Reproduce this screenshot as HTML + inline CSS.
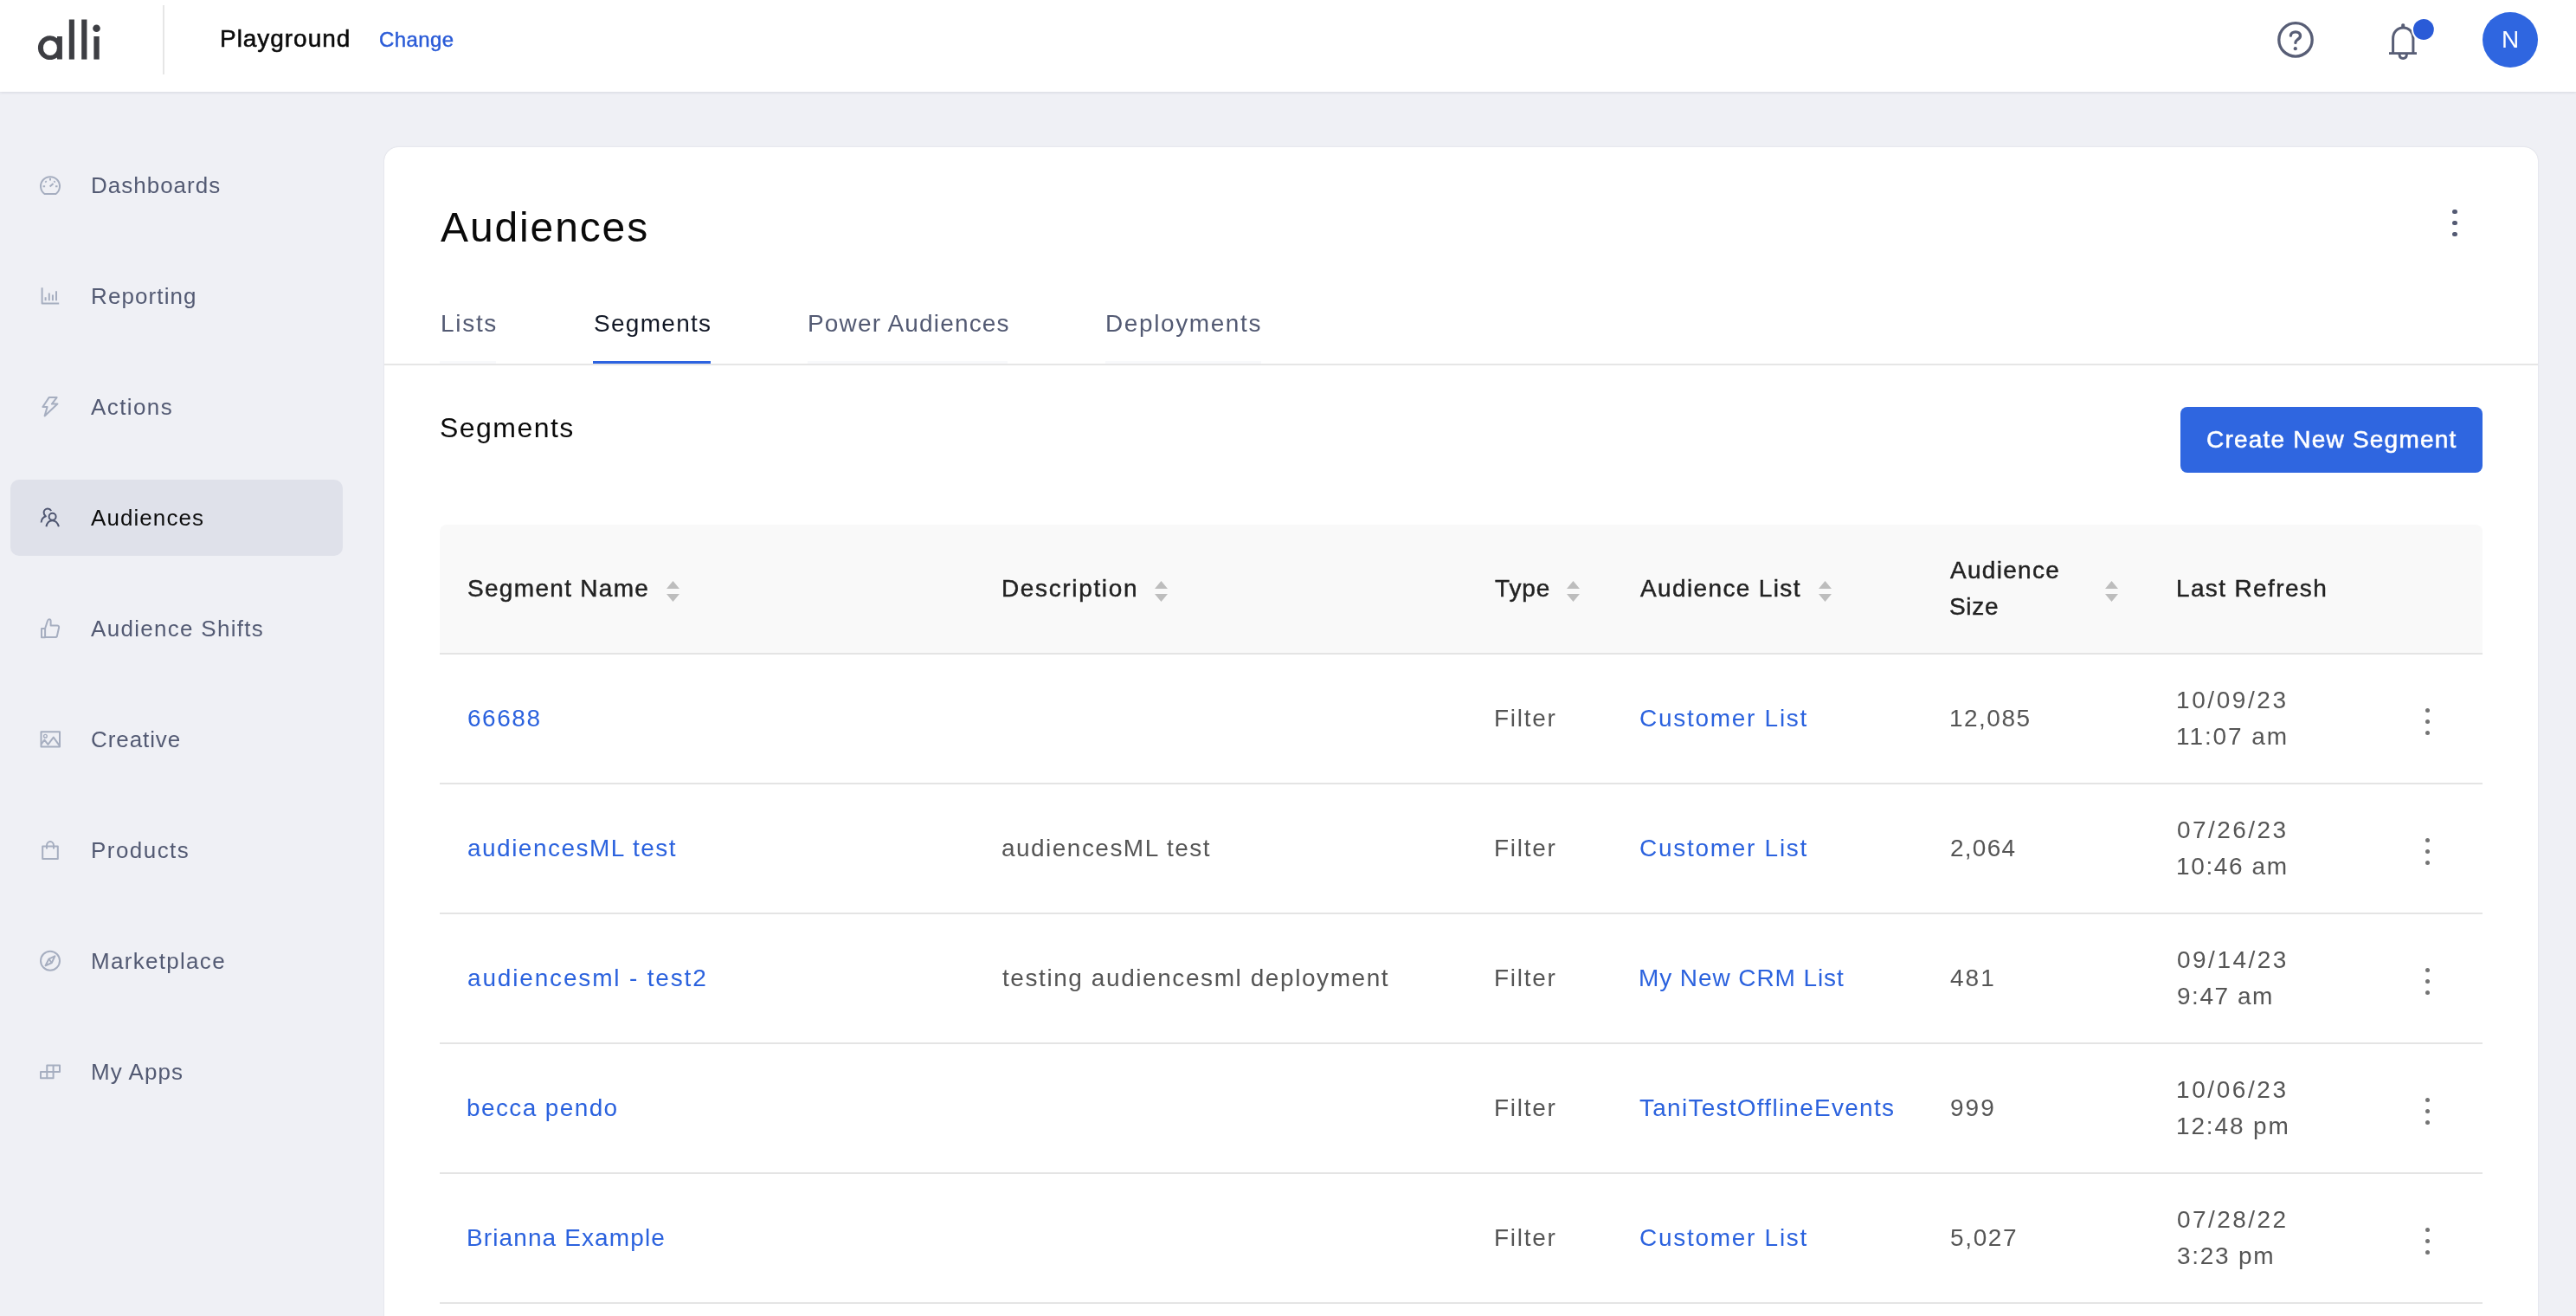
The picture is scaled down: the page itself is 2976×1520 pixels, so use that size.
<!DOCTYPE html>
<html><head><meta charset="utf-8"><title>Audiences - Segments</title>
<style>
html,body{margin:0;padding:0}
body{width:2976px;height:1520px;overflow:hidden;position:relative;background:#eff0f5;font-family:"Liberation Sans",sans-serif}
.t{position:absolute;white-space:pre;line-height:1;will-change:transform;font-family:"Liberation Sans",sans-serif}
.b{position:absolute}
@media (max-width:2000px){html{zoom:0.5}}
</style></head><body>
<div class="b" style="left:0px;top:0px;width:2976px;height:106px;background:#fff;box-shadow:0 1px 3px rgba(30,40,70,.12);z-index:2"></div>
<div class="b" style="left:188px;top:6px;width:2px;height:80px;background:#e6e6e6;z-index:3"></div>
<svg class="b" style="left:0;top:0;z-index:3" width="140" height="90" viewBox="0 0 140 90">
<g fill="#3d3e43">
<path fill-rule="evenodd" d="M57.9 41.3a13.9 13.9 0 1 0 8.1 25.1v2.2h5.9V42.1H66v2.2a13.8 13.8 0 0 0-8.1-3zM57.9 46.5a8 8.8 0 1 1 0 17.6a8 8.8 0 1 1 0-17.6z"/>
<rect x="79.8" y="22.5" width="6.1" height="46.1"/>
<rect x="94.2" y="22.5" width="6.2" height="46.1"/>
<rect x="108.4" y="42" width="6.3" height="26.6"/>
<circle cx="111.5" cy="32.8" r="4.3"/>
</g></svg>
<div class="t" style="left:254.30px;top:31.00px;font-size:28px;color:#0b0b0b;letter-spacing:0.956px;-webkit-text-stroke:0.55px #0b0b0b;z-index:4">Playground</div>
<div class="t" style="left:438.00px;top:34.45px;font-size:24px;color:#2a5bd7;letter-spacing:0.400px;-webkit-text-stroke:0.45px #2a5bd7;z-index:4">Change</div>
<svg class="b" style="left:2620px;top:10px;z-index:3" width="100" height="80" viewBox="0 0 100 80">
<g fill="none" stroke="#585e76" stroke-width="3.3" stroke-linecap="round">
<circle cx="32" cy="35.9" r="19.2"/>
<path d="M26.4 31.2c0-2.7 2.4-4.4 5.6-4.4s5.5 1.9 5.5 4.6c0 2.3-1.7 3.3-3.5 4.6c-1.5 1.1-2.1 2.1-2.1 3.4"/>
</g><circle cx="31.8" cy="46.2" r="2.1" fill="#585e76"/></svg>
<svg class="b" style="left:2740px;top:10px;z-index:3" width="100" height="80" viewBox="0 0 100 80">
<g fill="none" stroke="#585e76" stroke-width="3" stroke-linejoin="round">
<path d="M24.6 51.6V34.5c0-7.2 5-12.6 11.8-12.6s11.5 5.4 11.5 12.6v17.1"/>
<path d="M32 52.8c0.2 2.9 2 4.6 4.2 4.6s4-1.7 4.2-4.6"/>
</g>
<rect x="20" y="50.2" width="32" height="2.8" fill="#585e76"/>
<rect x="34.2" y="17.3" width="4" height="5" rx="1.5" fill="#585e76"/>
<circle cx="59.9" cy="24" r="14" fill="#fff"/>
<circle cx="59.9" cy="24" r="11.9" fill="#2a5bd7"/>
</svg>
<div class="b" style="left:2868px;top:14px;width:64px;height:64px;background:#2f66e0;border-radius:50%;z-index:3"></div>
<div class="t" style="left:2890.00px;top:32.00px;font-size:28px;color:#fff;letter-spacing:0.000px;z-index:4">N</div>
<div class="b" style="left:12px;top:554px;width:384px;height:88px;background:#dfe1ea;border-radius:10px"></div>
<div class="t" style="left:104.70px;top:201.35px;font-size:26px;color:#535a73;letter-spacing:1.000px;">Dashboards</div>
<svg class="b" style="left:40px;top:196px" width="36" height="36" viewBox="0 0 36 36"><g fill="none" stroke="#a6aec0" stroke-width="2" stroke-linejoin="round"><path d="M11.5 28A11 11 0 1 1 24.5 28Z"/><path d="M18 9.8v2.8M9.6 19.2h2.5M24 19.2h2.5M12.4 13.3l1.2 1.2M23.6 13.3l-1.2 1.2M17.6 19.6l4-3.6"/></g></svg>
<div class="t" style="left:104.90px;top:329.35px;font-size:26px;color:#535a73;letter-spacing:1.100px;">Reporting</div>
<svg class="b" style="left:40px;top:324px" width="36" height="36" viewBox="0 0 36 36"><g fill="none" stroke="#a6aec0" stroke-width="2" stroke-linejoin="round"><path d="M8.6 8.3V26.5H28.2"/><path d="M12.6 19.2v4M16.8 14.4v8.8M20.9 16.5v6.7M25 12.2v11"/></g></svg>
<div class="t" style="left:104.70px;top:457.35px;font-size:26px;color:#535a73;letter-spacing:1.400px;">Actions</div>
<svg class="b" style="left:40px;top:452px" width="36" height="36" viewBox="0 0 36 36"><g fill="none" stroke="#a6aec0" stroke-width="2" stroke-linejoin="round"><path d="M16.6 7.1H25.6L19.9 14.6H26.4L11.6 28.4L14.6 18H9.4Z"/></g></svg>
<div class="t" style="left:104.70px;top:585.35px;font-size:26px;color:#0d0d0d;letter-spacing:1.075px;">Audiences</div>
<svg class="b" style="left:40px;top:580px" width="36" height="36" viewBox="0 0 36 36"><g fill="none" stroke="#4f5671" stroke-width="2" stroke-linejoin="round"><circle cx="20.6" cy="16.7" r="4"/><path d="M13.4 28.3c0.9-4.2 3.6-7.1 7-7.1s6.3 2.9 7.5 7.1"/><path d="M19.2 9.9c-0.9-1.5-2.4-2.4-4.1-2.4c-2.6 0-4.5 2.1-4.5 4.6c0 1.7 0.9 3.2 2.3 4.2c-3.2 1-5 3.5-5.3 7.2"/></g></svg>
<div class="t" style="left:104.70px;top:713.35px;font-size:26px;color:#535a73;letter-spacing:1.300px;">Audience Shifts</div>
<svg class="b" style="left:40px;top:708px" width="36" height="36" viewBox="0 0 36 36"><g fill="none" stroke="#a6aec0" stroke-width="2" stroke-linejoin="round"><path d="M8 18H12.1V28.2H8Z"/><path d="M12.1 18L14.9 9.3c0.4-1.3 1-2.1 1.9-2.1c1 0 1.8 0.8 1.8 2.1v5.1h7.5c1.3 0 2.3 1.1 2 2.3l-2.1 9.5c-0.2 1.1-1.1 1.9-2.2 1.9H12.1"/></g></svg>
<div class="t" style="left:104.80px;top:841.35px;font-size:26px;color:#535a73;letter-spacing:0.914px;">Creative</div>
<svg class="b" style="left:40px;top:836px" width="36" height="36" viewBox="0 0 36 36"><g fill="none" stroke="#a6aec0" stroke-width="2" stroke-linejoin="round"><rect x="7.5" y="9.2" width="21.5" height="17.2"/><circle cx="12.4" cy="14.2" r="1.85" stroke-width="1.4"/><path d="M7.5 23.6l3.9-5l4.1 5.3l6.3-8.3l7.2 10"/></g></svg>
<div class="t" style="left:104.80px;top:969.35px;font-size:26px;color:#535a73;letter-spacing:1.457px;">Products</div>
<svg class="b" style="left:40px;top:964px" width="36" height="36" viewBox="0 0 36 36"><g fill="none" stroke="#a6aec0" stroke-width="2" stroke-linejoin="round"><rect x="9.2" y="13.4" width="17.6" height="14.5"/><path d="M14 16.6v-3.8c0-2.8 1.8-4.8 4-4.8s4 2 4 4.8v3.8"/></g></svg>
<div class="t" style="left:104.80px;top:1097.35px;font-size:26px;color:#535a73;letter-spacing:1.300px;">Marketplace</div>
<svg class="b" style="left:40px;top:1092px" width="36" height="36" viewBox="0 0 36 36"><g fill="none" stroke="#a6aec0" stroke-width="2" stroke-linejoin="round"><circle cx="18" cy="17.8" r="11"/><path d="M12.6 23.3L16.4 15.6L23.4 12.3L19.8 20Z"/><path d="M16.4 15.6L19.8 20"/></g></svg>
<div class="t" style="left:104.80px;top:1225.35px;font-size:26px;color:#535a73;letter-spacing:1.033px;">My Apps</div>
<svg class="b" style="left:40px;top:1220px" width="36" height="36" viewBox="0 0 36 36"><g fill="none" stroke="#a6aec0" stroke-width="2" stroke-linejoin="round"><path d="M7 17.9H29V10.4H14.3V25.2H7Z"/><path d="M21.6 10.4V25.2H14.3"/></g></svg>
<div class="b" style="left:444px;top:170px;width:2488px;height:1400px;background:#fff;border-radius:16px;box-shadow:0 0 1.5px rgba(20,30,60,.18)"></div>
<div class="t" style="left:509.20px;top:238.50px;font-size:48px;color:#0a0a0a;letter-spacing:1.875px;">Audiences</div>
<div class="b" style="left:2833.3px;top:242.05px;width:5.3px;height:5.3px;background:#535a73;border-radius:50%"></div>
<div class="b" style="left:2833.3px;top:255.15px;width:5.3px;height:5.3px;background:#535a73;border-radius:50%"></div>
<div class="b" style="left:2833.3px;top:268.05px;width:5.3px;height:5.3px;background:#535a73;border-radius:50%"></div>
<div class="b" style="left:444px;top:420px;width:2488px;height:2px;background:#e6e6e6;"></div>
<div class="t" style="left:508.60px;top:360.15px;font-size:28px;color:#535a73;letter-spacing:1.700px;">Lists</div>
<div class="t" style="left:685.80px;top:360.15px;font-size:28px;color:#121826;letter-spacing:1.286px;">Segments</div>
<div class="t" style="left:932.80px;top:360.15px;font-size:28px;color:#535a73;letter-spacing:1.157px;">Power Audiences</div>
<div class="t" style="left:1276.70px;top:360.15px;font-size:28px;color:#535a73;letter-spacing:1.600px;">Deployments</div>
<div class="b" style="left:685px;top:417px;width:136px;height:3px;background:#2d63e0;"></div>
<div class="b" style="left:508px;top:417px;width:65px;height:3px;background:#f8f9fb;"></div>
<div class="b" style="left:933px;top:417px;width:231px;height:3px;background:#f8f9fb;"></div>
<div class="b" style="left:1277px;top:417px;width:180px;height:3px;background:#f8f9fb;"></div>
<div class="t" style="left:507.50px;top:478.25px;font-size:32px;color:#0a0a0a;letter-spacing:1.457px;">Segments</div>
<div class="b" style="left:2519px;top:470px;width:349px;height:76px;background:#2f66e0;border-radius:8px"></div>
<div class="t" style="left:2549.20px;top:494.20px;font-size:28px;color:#fff;letter-spacing:1.212px;-webkit-text-stroke:0.55px #fff;">Create New Segment</div>
<div class="b" style="left:508px;top:606px;width:2360px;height:148px;background:#f9f9f9;border-radius:8px 8px 0 0"></div>
<div class="b" style="left:508px;top:754px;width:2360px;height:2px;background:#e4e4e4;"></div>
<div class="b" style="left:508px;top:904px;width:2360px;height:2px;background:#e4e4e4;"></div>
<div class="b" style="left:508px;top:1054px;width:2360px;height:2px;background:#e4e4e4;"></div>
<div class="b" style="left:508px;top:1204px;width:2360px;height:2px;background:#e4e4e4;"></div>
<div class="b" style="left:508px;top:1354px;width:2360px;height:2px;background:#e4e4e4;"></div>
<div class="b" style="left:508px;top:1504px;width:2360px;height:2px;background:#e4e4e4;"></div>
<div class="t" style="left:540.00px;top:666.25px;font-size:28px;color:#222222;letter-spacing:1.309px;-webkit-text-stroke:0.45px #222222;">Segment Name</div>
<svg class="b" style="left:769.6px;top:670px" width="15" height="26" viewBox="0 0 15 26"><path d="M7.5 1L15 10H0Z M0 16H15L7.5 25Z" fill="#bdbdbd"/></svg>
<div class="t" style="left:1156.75px;top:666.15px;font-size:28px;color:#222222;letter-spacing:1.640px;-webkit-text-stroke:0.45px #222222;">Description</div>
<svg class="b" style="left:1333.75px;top:670px" width="15" height="26" viewBox="0 0 15 26"><path d="M7.5 1L15 10H0Z M0 16H15L7.5 25Z" fill="#bdbdbd"/></svg>
<div class="t" style="left:1727.10px;top:666.15px;font-size:28px;color:#222222;letter-spacing:0.867px;-webkit-text-stroke:0.45px #222222;">Type</div>
<svg class="b" style="left:1810.3px;top:670px" width="15" height="26" viewBox="0 0 15 26"><path d="M7.5 1L15 10H0Z M0 16H15L7.5 25Z" fill="#bdbdbd"/></svg>
<div class="t" style="left:1895.10px;top:666.15px;font-size:28px;color:#222222;letter-spacing:1.367px;-webkit-text-stroke:0.45px #222222;">Audience List</div>
<svg class="b" style="left:2100.5px;top:670px" width="15" height="26" viewBox="0 0 15 26"><path d="M7.5 1L15 10H0Z M0 16H15L7.5 25Z" fill="#bdbdbd"/></svg>
<div class="t" style="left:2253.40px;top:644.70px;font-size:28px;color:#222222;letter-spacing:1.286px;-webkit-text-stroke:0.45px #222222;">Audience</div>
<div class="t" style="left:2252.40px;top:686.85px;font-size:28px;color:#222222;letter-spacing:0.667px;-webkit-text-stroke:0.45px #222222;">Size</div>
<svg class="b" style="left:2431.6px;top:670px" width="15" height="26" viewBox="0 0 15 26"><path d="M7.5 1L15 10H0Z M0 16H15L7.5 25Z" fill="#bdbdbd"/></svg>
<div class="t" style="left:2514.40px;top:665.75px;font-size:28px;color:#222222;letter-spacing:1.364px;-webkit-text-stroke:0.45px #222222;">Last Refresh</div>
<div class="t" style="left:540.40px;top:815.90px;font-size:28px;color:#2b62de;letter-spacing:1.550px;">66688</div>
<div class="t" style="left:1726.20px;top:815.90px;font-size:28px;color:#555555;letter-spacing:1.720px;">Filter</div>
<div class="t" style="left:1894.40px;top:815.90px;font-size:28px;color:#2b62de;letter-spacing:1.717px;">Customer List</div>
<div class="t" style="left:2251.70px;top:815.90px;font-size:28px;color:#555555;letter-spacing:1.480px;">12,085</div>
<div class="t" style="left:2513.80px;top:795.05px;font-size:28px;color:#555555;letter-spacing:2.571px;">10/09/23</div>
<div class="t" style="left:2513.80px;top:836.75px;font-size:28px;color:#555555;letter-spacing:1.914px;">11:07 am</div>
<div class="b" style="left:2801.5px;top:818.1px;width:5px;height:5px;background:#747474;border-radius:50%"></div>
<div class="b" style="left:2801.5px;top:831.2px;width:5px;height:5px;background:#747474;border-radius:50%"></div>
<div class="b" style="left:2801.5px;top:844.1px;width:5px;height:5px;background:#747474;border-radius:50%"></div>
<div class="t" style="left:540.40px;top:965.90px;font-size:28px;color:#2b62de;letter-spacing:1.480px;">audiencesML test</div>
<div class="t" style="left:1156.60px;top:965.90px;font-size:28px;color:#555555;letter-spacing:1.467px;">audiencesML test</div>
<div class="t" style="left:1726.20px;top:965.90px;font-size:28px;color:#555555;letter-spacing:1.720px;">Filter</div>
<div class="t" style="left:1894.40px;top:965.90px;font-size:28px;color:#2b62de;letter-spacing:1.717px;">Customer List</div>
<div class="t" style="left:2252.70px;top:965.90px;font-size:28px;color:#555555;letter-spacing:1.250px;">2,064</div>
<div class="t" style="left:2514.80px;top:945.05px;font-size:28px;color:#555555;letter-spacing:2.429px;">07/26/23</div>
<div class="t" style="left:2513.80px;top:986.75px;font-size:28px;color:#555555;letter-spacing:1.629px;">10:46 am</div>
<div class="b" style="left:2801.5px;top:968.1px;width:5px;height:5px;background:#747474;border-radius:50%"></div>
<div class="b" style="left:2801.5px;top:981.2px;width:5px;height:5px;background:#747474;border-radius:50%"></div>
<div class="b" style="left:2801.5px;top:994.1px;width:5px;height:5px;background:#747474;border-radius:50%"></div>
<div class="t" style="left:540.40px;top:1115.90px;font-size:28px;color:#2b62de;letter-spacing:1.833px;">audiencesml - test2</div>
<div class="t" style="left:1157.60px;top:1115.90px;font-size:28px;color:#555555;letter-spacing:1.572px;">testing audiencesml deployment</div>
<div class="t" style="left:1726.20px;top:1115.90px;font-size:28px;color:#555555;letter-spacing:1.720px;">Filter</div>
<div class="t" style="left:1893.40px;top:1115.90px;font-size:28px;color:#2b62de;letter-spacing:0.914px;">My New CRM List</div>
<div class="t" style="left:2252.70px;top:1115.90px;font-size:28px;color:#555555;letter-spacing:2.000px;">481</div>
<div class="t" style="left:2514.80px;top:1095.05px;font-size:28px;color:#555555;letter-spacing:2.486px;">09/14/23</div>
<div class="t" style="left:2514.80px;top:1136.75px;font-size:28px;color:#555555;letter-spacing:1.533px;">9:47 am</div>
<div class="b" style="left:2801.5px;top:1118.1px;width:5px;height:5px;background:#747474;border-radius:50%"></div>
<div class="b" style="left:2801.5px;top:1131.2px;width:5px;height:5px;background:#747474;border-radius:50%"></div>
<div class="b" style="left:2801.5px;top:1144.1px;width:5px;height:5px;background:#747474;border-radius:50%"></div>
<div class="t" style="left:539.40px;top:1265.90px;font-size:28px;color:#2b62de;letter-spacing:1.380px;">becca pendo</div>
<div class="t" style="left:1726.20px;top:1265.90px;font-size:28px;color:#555555;letter-spacing:1.720px;">Filter</div>
<div class="t" style="left:1894.40px;top:1265.90px;font-size:28px;color:#2b62de;letter-spacing:1.260px;">TaniTestOfflineEvents</div>
<div class="t" style="left:2252.70px;top:1265.90px;font-size:28px;color:#555555;letter-spacing:2.000px;">999</div>
<div class="t" style="left:2513.80px;top:1245.05px;font-size:28px;color:#555555;letter-spacing:2.571px;">10/06/23</div>
<div class="t" style="left:2513.80px;top:1286.75px;font-size:28px;color:#555555;letter-spacing:1.857px;">12:48 pm</div>
<div class="b" style="left:2801.5px;top:1268.1px;width:5px;height:5px;background:#747474;border-radius:50%"></div>
<div class="b" style="left:2801.5px;top:1281.2px;width:5px;height:5px;background:#747474;border-radius:50%"></div>
<div class="b" style="left:2801.5px;top:1294.1px;width:5px;height:5px;background:#747474;border-radius:50%"></div>
<div class="t" style="left:539.40px;top:1415.90px;font-size:28px;color:#2b62de;letter-spacing:1.114px;">Brianna Example</div>
<div class="t" style="left:1726.20px;top:1415.90px;font-size:28px;color:#555555;letter-spacing:1.720px;">Filter</div>
<div class="t" style="left:1894.40px;top:1415.90px;font-size:28px;color:#2b62de;letter-spacing:1.717px;">Customer List</div>
<div class="t" style="left:2252.70px;top:1415.90px;font-size:28px;color:#555555;letter-spacing:1.650px;">5,027</div>
<div class="t" style="left:2514.80px;top:1395.05px;font-size:28px;color:#555555;letter-spacing:2.429px;">07/28/22</div>
<div class="t" style="left:2514.80px;top:1436.75px;font-size:28px;color:#555555;letter-spacing:1.733px;">3:23 pm</div>
<div class="b" style="left:2801.5px;top:1418.1px;width:5px;height:5px;background:#747474;border-radius:50%"></div>
<div class="b" style="left:2801.5px;top:1431.2px;width:5px;height:5px;background:#747474;border-radius:50%"></div>
<div class="b" style="left:2801.5px;top:1444.1px;width:5px;height:5px;background:#747474;border-radius:50%"></div>
</body></html>
